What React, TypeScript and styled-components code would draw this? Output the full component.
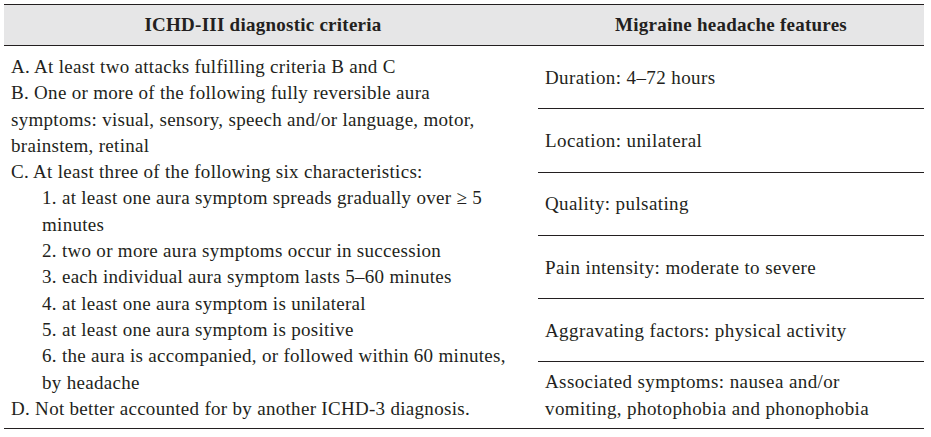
import React from "react";
import styled, { createGlobalStyle } from "styled-components";

const GlobalStyle = createGlobalStyle`
  html, body {
    margin: 0;
    padding: 0;
    background: #fff;
  }
  body {
    font-family: "Liberation Serif", "Times New Roman", serif;
    color: #231f20;
  }
`;

const Page = styled.div`
  padding: 4px 0 0 4px;
`;

const Table = styled.div`
  width: 920px;
  display: grid;
  grid-template-columns: 518px 1fr;
  grid-template-rows: auto 1fr;
  border-top: 1px solid #231f20;
  border-bottom: 1px solid #231f20;
`;

const HeadCell = styled.div<{ $right?: boolean }>`
  height: 40px;
  display: flex;
  align-items: center;
  justify-content: center;
  background: #e6e6e7;
  border-bottom: 1px solid #231f20;
  font-size: 19px;
  font-weight: bold;
  letter-spacing: 0.25px;
  padding-left: ${(p) => (p.$right ? "16px" : "0")};
  white-space: nowrap;
`;

const HeadText = styled.span`
  display: block;
`;

const CriteriaCell = styled.div`
  padding: 8px 0 6px 7px;
  font-size: 19px;
  letter-spacing: 0.3px;
  line-height: 26.3px;
`;

const Line = styled.div<{ $indent?: boolean }>`
  white-space: nowrap;
  padding-left: ${(p) => (p.$indent ? "31px" : "0")};
`;

const FeatureColumn = styled.div`
  display: flex;
  flex-direction: column;
  margin-left: 16px;
`;

const FeatureCell = styled.div<{ $last?: boolean }>`
  flex: ${(p) => (p.$last ? "1 1 auto" : "0 0 63.3px")};
  box-sizing: border-box;
  display: flex;
  flex-direction: column;
  justify-content: center;
  padding-left: 7px;
  font-size: 19px;
  letter-spacing: 0.4px;
  line-height: 27px;
  border-bottom: ${(p) => (p.$last ? "none" : "1px solid #231f20")};
  white-space: nowrap;
`;

const criteria: { text: string; indent?: boolean }[] = [
  { text: "A. At least two attacks fulfilling criteria B and C" },
  { text: "B. One or more of the following fully reversible aura" },
  { text: "symptoms: visual, sensory, speech and/or language, motor," },
  { text: "brainstem, retinal" },
  { text: "C. At least three of the following six characteristics:" },
  { text: "1. at least one aura symptom spreads gradually over \u2265 5", indent: true },
  { text: "minutes", indent: true },
  { text: "2. two or more aura symptoms occur in succession", indent: true },
  { text: "3. each individual aura symptom lasts 5\u201360 minutes", indent: true },
  { text: "4. at least one aura symptom is unilateral", indent: true },
  { text: "5. at least one aura symptom is positive", indent: true },
  { text: "6. the aura is accompanied, or followed within 60 minutes,", indent: true },
  { text: "by headache", indent: true },
  { text: "D. Not better accounted for by another ICHD-3 diagnosis." },
];

const features: string[][] = [
  ["Duration: 4\u201372 hours"],
  ["Location: unilateral"],
  ["Quality: pulsating"],
  ["Pain intensity: moderate to severe"],
  ["Aggravating factors: physical activity"],
  ["Associated symptoms: nausea and/or", "vomiting, photophobia and phonophobia"],
];

export default function App() {
  return (
    <>
      <GlobalStyle />
      <Page>
        <Table>
          <HeadCell>
            <HeadText>ICHD-III diagnostic criteria</HeadText>
          </HeadCell>
          <HeadCell $right>
            <HeadText>Migraine headache features</HeadText>
          </HeadCell>
          <CriteriaCell>
            {criteria.map((c, i) => (
              <Line key={i} $indent={c.indent}>
                {c.text}
              </Line>
            ))}
          </CriteriaCell>
          <FeatureColumn>
            {features.map((lines, i) => (
              <FeatureCell key={i} $last={i === features.length - 1}>
                {lines.map((l, j) => (
                  <div key={j}>{l}</div>
                ))}
              </FeatureCell>
            ))}
          </FeatureColumn>
        </Table>
      </Page>
    </>
  );
}
